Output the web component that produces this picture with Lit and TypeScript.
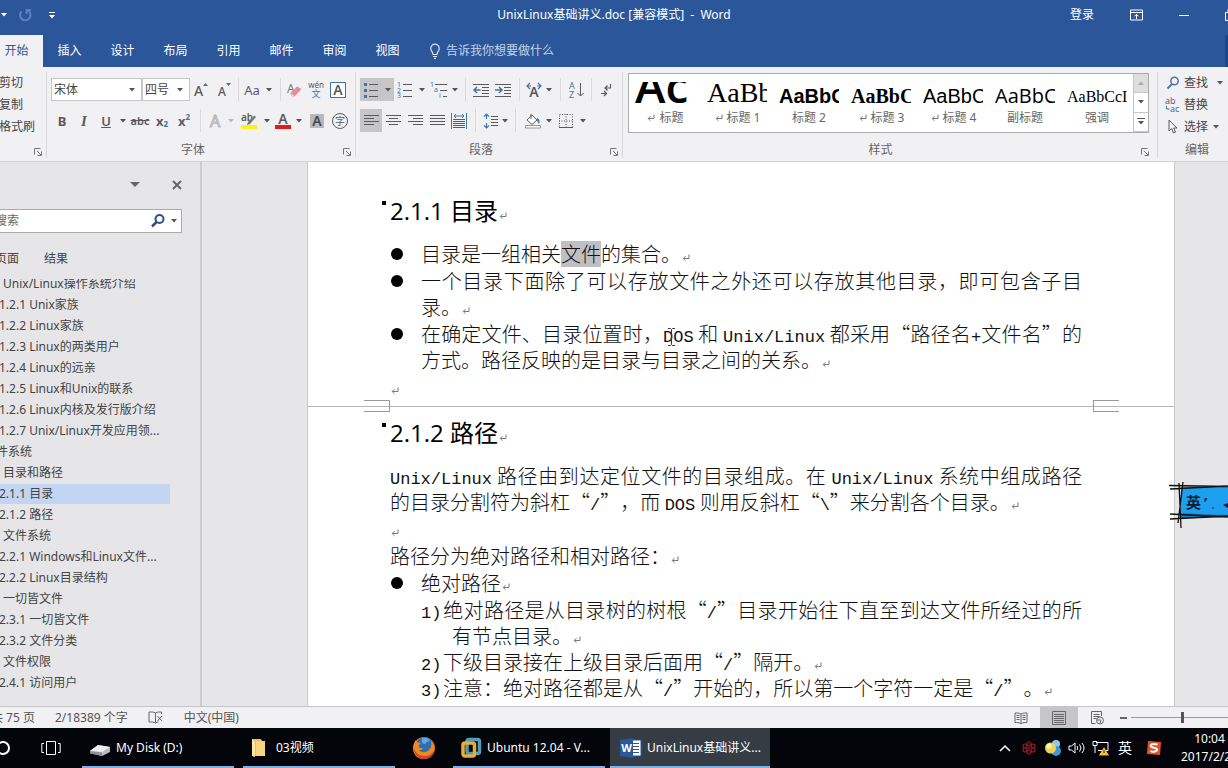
import { LitElement, html, svg, css, TemplateResult } from "lit";
import { customElement, state } from "lit/decorators.js";
import { classMap } from "lit/directives/class-map.js";

const icon = (w: number, h: number, body: unknown) =>
  html`<svg class="ic" width=${w} height=${h} viewBox="0 0 ${w} ${h}" fill="none" aria-hidden="true">${body}</svg>`;

const G = "#5b5b5f";
const B = "#3f76a8";

const caret = (c = "#555") => icon(6, 4, svg`<path d="M0 0h6L3 3.5z" fill=${c}/>`);
const launcher = icon(8, 8, svg`<path d="M.5 6.5v-6h6M3 3l4 4M7.5 3.5v4h-4" stroke="#777"/>`);
const mark = html`<svg class="mark" width="8" height="8" viewBox="0 0 8 8" fill="none" aria-hidden="true"><path d="M7 .5v4H1.5M3.5 2.2L1.2 4.5l2.3 2.3" stroke="#777"/></svg>`;
const lines = (ys: number[], x1: number, x2: number, c = G) =>
  ys.map((y) => svg`<path d="M${x1} ${y}.5H${x2}" stroke=${c}/>`);

const I: Record<string, TemplateResult> = {
  undo: icon(14, 14, svg`<path d="M3.6 3.4A5.2 5.2 0 1 0 9.6 2.4M8.6 6V2H12.8" stroke="#5c82bd" stroke-width="2"/>`),
  custom: icon(8, 7, svg`<path d="M1 .5h6" stroke="#fff"/><path d="M1 3h6L4 6.5z" fill="#fff"/>`),
  ribbonOpt: icon(14, 12, svg`<path d="M.5 1h12v10H.5zM.5 3.5h12M6.5 10V5.5M4.5 7.3l2-2 2 2" stroke="#fff"/>`),
  min: icon(12, 12, svg`<path d="M1 6.5h10" stroke="#fff"/>`),
  restore: icon(12, 12, svg`<path d="M.5 3.5h8v8h-8zM3 3V.5h8.500v8H9" stroke="#fff"/>`),
  bulb: icon(12, 16, svg`<path d="M4 11.500C4 9 1.800 8.300 1.800 5.400a4.200 4.200 0 0 1 8.400 0C10.200 8.300 8 9 8 11.500zM4 13.500h4M5 15.300h2" stroke="#dbe6f6" stroke-width="1.200"/>`),
  grow: icon(16, 16, svg`<text x="1" y="14" font-size="14" font-weight="500" fill=${G}>A</text><path d="M10 4h5L12.500 1z" fill=${B}/>`),
  shrink: icon(16, 16, svg`<text x="2" y="14" font-size="12" font-weight="500" fill=${G}>A</text><path d="M10 1h5L12.500 4z" fill=${B}/>`),
  eraser: icon(18, 16, svg`<text x="1" y="11" font-size="12" fill="#77777b">A</text><path d="M4.500 11L11 4.500l4.500 2.500L9 14H6z" fill="#e58a9b"/><path d="M4.500 11L9 14H6z" fill="#fff" stroke="#e58a9b" stroke-width=".6"/>`),
  pinyin: icon(18, 18, svg`<text x="9" y="7" font-size="8" text-anchor="middle" fill=${G}>wén</text><text x="9" y="16" font-size="9" text-anchor="middle" fill=${B}>文</text>`),
  boxA: icon(18, 18, svg`<path d="M1.500 1.500h15v15h-15z" fill="#fff" stroke=${B}/><text x="9" y="14" font-size="14" text-anchor="middle" font-weight="600" fill=${G}>A</text>`),
  fx: icon(16, 16, svg`<text x="8" y="14" font-size="16" text-anchor="middle" fill="#fff" stroke="#b5b5ba">A</text>`),
  hilite: icon(20, 18, svg`<text x="2" y="9" font-size="10" font-weight="600" fill=${G}>ab</text><path d="M15.500 3.500l1.500 1.500-6 7-3 1 1-3z" fill="#777" /><path d="M2 13h16v4H2z" fill="#fbf312"/>`),
  fcolor: icon(18, 18, svg`<text x="9" y="12" font-size="14" text-anchor="middle" font-weight="600" fill=${G}>A</text><path d="M1 13h16v4H1z" fill="#e01b1b"/>`),
  shadeA: icon(16, 16, svg`<path d="M1 1h14v14H1z" fill="#b9b9bd"/><text x="8" y="13" font-size="14" text-anchor="middle" font-weight="600" fill="#48484c">A</text>`),
  ring: icon(18, 18, svg`<circle cx="9" cy="9" r="7.500" stroke=${G}/><text x="9" y="12.500" font-size="10" text-anchor="middle" fill=${G}>字</text>`),
  bullets: icon(16, 16, svg`${[1, 7, 13].map((y) => svg`<rect x="1" y=${y} width="3" height="3" fill=${B}/>`)}${lines([2, 8, 14], 6, 15)}`),
  numbers: icon(16, 16, svg`${["1", "2", "3"].map((t, i) => svg`<text x="0" y=${5 + i * 5.5} font-size="7" fill=${B}>${t}</text>`)}${lines([2, 8, 14], 6, 15)}`),
  multi: icon(18, 16, svg`<text x="0" y="5" font-size="7" fill=${B}>1</text><text x="4" y="10" font-size="7" fill=${B}>a</text><text x="9" y="16" font-size="7" fill=${B}>i</text>${lines([2], 5, 17)}${lines([8], 10, 17)}${lines([14], 13, 17)}`),
  outdent: icon(16, 14, svg`${lines([1, 13], 0, 16)}${lines([4, 7, 10], 9, 16)}<path d="M7.500 7H1M4 4L1 7l3 3" stroke=${B} stroke-width="1.500"/>`),
  indent: icon(16, 14, svg`${lines([1, 13], 0, 16)}${lines([4, 7, 10], 9, 16)}<path d="M0 7h7M4 4l3 3-3 3" stroke=${B} stroke-width="1.500"/>`),
  scaleA: icon(18, 16, svg`<text x="9" y="15" font-size="14" text-anchor="middle" font-weight="600" fill=${G}>A</text><path d="M5 1L2 4l3 3M13 1l3 3-3 3M2 4h4M16 4h-4" stroke=${B} stroke-width="1.200"/>`),
  sort: icon(16, 18, svg`<text x="0" y="8" font-size="9" fill=${B}>A</text><text x="0" y="17" font-size="9" fill="#7a5a9a">Z</text><path d="M11.500 2v13M8.500 12l3 3 3-3" stroke=${G}/>`),
  marks: icon(12, 14, svg`<path d="M10.500 1v4H5M7.500 2.500L5 5l2.500 2.500M1 10.500h5M4 8l2.500 2.500L4 13" stroke=${G} stroke-width="1.200"/>`),
  left: icon(15, 13, svg`${lines([1, 7], 0, 15)}${lines([4, 10], 0, 10)}`),
  center: icon(15, 13, svg`${lines([1, 7], 0, 15)}${lines([4, 10], 3, 12)}`),
  right: icon(15, 13, svg`${lines([1, 7], 0, 15)}${lines([4, 10], 5, 15)}`),
  just: icon(15, 13, svg`${lines([1, 4, 7, 10], 0, 15)}`),
  dist: icon(16, 16, svg`<path d="M.5 0v16M15.500 0v16M3 3h10M5 1L3 3l2 2M11 1l2 2-2 2" stroke=${B}/>${lines([6, 8, 10, 12, 14], 2, 14)}`),
  spacing: icon(16, 16, svg`<path d="M3.500 1v5M3.500 10v5M1 3.500L3.500 1 6 3.500M1 12.500L3.500 15 6 12.500" stroke=${B} stroke-width="1.200"/>${lines([3, 6, 9, 12], 8, 15)}`),
  bucket: icon(18, 16, svg`<path d="M3 7l5-5 5 5-5 4.500zM7 1v5" stroke=${G} fill="#fff"/><path d="M13 5c3 1 3 4 2 6-1-2-2-2-2-6z" fill=${B}/><path d="M1.500 12.500h15v2.500h-15z" fill="#fff" stroke="#8a9a90"/>`),
  borders: icon(14, 14, svg`<path d="M.5.500h13v13H.5zM7 0v14M0 7h14" stroke=${G} stroke-dasharray="1 1.500"/><path d="M0 13.500h14" stroke=${G}/>`),
  find: icon(14, 14, svg`<circle cx="8.500" cy="5" r="3.700" stroke="#4a76ac" stroke-width="1.500"/><path d="M6 8L1.500 12.500" stroke="#4a76ac" stroke-width="2"/>`),
  replace: icon(16, 16, svg`<text x="0" y="7" font-size="9" fill=${G}>a<tspan fill="#8a4fa0">b</tspan></text><text x="5" y="15" font-size="9" fill="#3a6ea5">ac</text><path d="M1.500 9v3h3" stroke=${B}/>`),
  pointer: icon(12, 16, svg`<path d="M2 1v11l2.700-2.500L6.500 14l2-.9L6.700 9H10z" stroke=${G}/>`),
  close: icon(12, 12, svg`<path d="M2 2l8 8M10 2l-8 8" stroke="#666" stroke-width="2"/>`),
  search: icon(16, 16, svg`<circle cx="9.500" cy="6" r="4" stroke="#2f4f86" stroke-width="2"/><path d="M6.500 9L2 13.500" stroke="#2f4f86" stroke-width="2.500"/>`),
  proof: icon(16, 14, svg`<path d="M7.500 2v9.500M7.500 2C6 .8 3 1 1 1v10c2 0 5 0 6.500 1M7.500 2C9 .8 12 1 13.500 1v2M7.500 12c1-.8 2-1 3-1M9.500 5l4.500 5M14 5l-4.500 5" stroke="#666"/>`),
  read: icon(14, 12, svg`<path d="M7 2v9.500M7 2C5 1 3 1 1 1v9.500c2 0 4 0 6 1 2-1 4-1 6-1V1C11 1 9 1 7 2zM2.500 3.500h3M2.500 5.500h3M2.500 7.500h3M8.500 3.500h3M8.500 5.500h3M8.500 7.500h3" stroke="#666"/>`),
  print: icon(14, 14, svg`<path d="M.5.500h13v13H.5z" stroke="#666"/>${lines([3, 5, 7, 9, 11], 2, 12, "#666")}`),
  web: icon(14, 14, svg`<path d="M11.500 5V.500H1.500v12h4M3.500 3.500h6M3.500 5.500h6M3.500 7.500h3" stroke="#666"/><circle cx="10" cy="9.500" r="3.500" stroke="#666"/><path d="M7 9h4l-1 3" stroke="#666"/>`),
  cortana: icon(16, 16, svg`<circle cx="8" cy="8" r="6" stroke="#fff" stroke-width="2"/>`),
  taskview: icon(20, 16, svg`<path d="M5.500 1.500h9v13h-9zM3 3.500H.800v9H3M17 3.500h2.200v9H17" stroke="#fff"/>`),
  disk: icon(22, 18, svg`<path d="M1 12L9 6l12 2v5l-8 4L1 14z" fill="#b9bcc0"/><path d="M1 12L9 6l12 2-8 5z" fill="#eceef0"/><path d="M1 12l12 1.500V17L1 14.500z" fill="#8d9196"/>`),
  folder: icon(16, 20, svg`<path d="M1 1h9l1 2h2v15H1z" fill="#e9bd5b"/><path d="M1 1l3 2v16l-3-1z" fill="#fbe7a4"/><path d="M5 3h9v15H5z" fill="#f6d67c"/>`),
  firefox: icon(24, 24, svg`<circle cx="12" cy="12" r="11" fill="#e2691d"/><circle cx="12.500" cy="9" r="8" fill="#2c6fb3"/><path d="M10 2c3-1 7 0 8 3-2 1-3 0-4 2s-3 1-4-1 0-3 0-4z" fill="#63a8dd"/><path d="M4 4c0 1 1 2 1.500 2.500L9 7c-1 1-3 2-2 4 1 1.500 3 1 4 1-1 2-3 2-4 2 2 3 7 3 10 0 2-2 3-5 2-9 4 4 4 9 2 12-3 5-9 7-14 5S0 13 2 8c.5-1.500 1-3 2-4z" fill="#ee8a22"/><path d="M1.500 10c.5 6 5 10 11 10 4 0 7-2 9.500-5-1 5-5 8-10 8S1 18 1.500 10z" fill="#d5432a"/>`),
  vmware: icon(20, 20, svg`<rect x="6" y="1.500" width="12.500" height="14" rx="2" stroke="#4f9fb5" stroke-width="3.500"/><rect x="2" y="5" width="11.500" height="13" rx="2" stroke="#e9ad3b" stroke-width="3.500"/>`),
  word: icon(22, 20, svg`<path d="M10 2h11v16H10z" fill="#fff" stroke="#2b579a"/>${lines([5, 8, 11, 14], 13, 19, "#2b579a")}<path d="M0 2l13-2v20L0 18z" fill="#2b579a"/><text x="6.500" y="14" font-size="11" font-weight="700" text-anchor="middle" fill="#fff">W</text>`),
  chev: icon(12, 8, svg`<path d="M1 7l5-5 5 5" stroke="#fff" stroke-width="1.500"/>`),
  flower: icon(14, 14, svg`${[[7, 3], [7, 11], [3, 5], [11, 5], [3, 9], [11, 9]].map(([x, y]) => svg`<circle cx=${x} cy=${y} r="2" stroke="#9c1c26" stroke-width="1.200"/>`)}<circle cx="7" cy="7" r="1" fill="#9c1c26"/>`),
  bubble: icon(18, 18, svg`<circle cx="12" cy="5" r="4" fill="#8ccbe8"/><circle cx="12" cy="12" r="5" fill="#3f97d6"/><circle cx="6.500" cy="9" r="5.500" fill="#f2d25a"/><circle cx="5" cy="7" r="2.500" fill="#fdf2b8"/>`),
  speaker: icon(18, 14, svg`<path d="M1 5h2.500L7 2v10L3.500 9H1zM9 5q1.500 2 0 4M11.500 3.500q3 3.500 0 7M14 2q4 5 0 10" stroke="#fff"/>`),
  net: icon(18, 16, svg`<path d="M4 2.500h12v8H6M8 13.500h3M1 1.500h4v4H1zM3 6v7" stroke="#fff"/><path d="M12 7l5 8.500H7z" fill="#f1c232"/><path d="M12 10v3" stroke="#333"/>`),
  sogou: icon(16, 16, svg`<path d="M2 1l13 1-1 13-13-1z" fill="#e2532a"/><path d="M11.500 4.500C6 3 4 5 5 6.500c1 1.500 6 1 6 3S7 12.500 4.500 11" stroke="#fff" stroke-width="2"/>`),
};

type Tool = [kind: string, width: number, label?: string];

const fontRow1: Tool[] = [["grow", 24, "增大字号"], ["shrink", 22, "减小字号"], ["|", 6], ["Aa", 22, "更改大小写"], ["v", 12], ["|", 10], ["eraser", 20, "清除格式"], ["pinyin", 22, "拼音指南"], ["boxA", 22, "字符边框"]];
const fontRow2: Tool[] = [["B", 22, "加粗"], ["I", 22, "倾斜"], ["U", 22, "下划线"], ["v", 12], ["abc", 22, "删除线"], ["sub", 22, "下标"], ["sup", 22, "上标"], ["|", 10], ["fx", 20, "文本效果"], ["v~", 12], ["hilite", 24, "突出显示"], ["v", 12], ["fcolor", 20, "字体颜色"], ["v", 12], ["shadeA", 24, "字符底纹"], ["ring", 22, "带圈字符"]];
const paraRow1: Tool[] = [["bullets*", 22, "项目符号"], ["v*", 12], ["numbers", 22, "编号"], ["v", 12], ["multi", 22, "多级列表"], ["v", 10], ["|", 10], ["outdent", 22, "减少缩进量"], ["indent", 22, "增加缩进量"], ["|", 10], ["scaleA", 20, "中文版式"], ["v", 10], ["|", 12], ["sort", 22, "排序"], ["|", 6], ["marks", 24, "显示编辑标记"]];
const paraRow2: Tool[] = [["left*", 22, "左对齐"], ["center", 22, "居中"], ["right", 22, "右对齐"], ["just", 22, "两端对齐"], ["dist", 22, "分散对齐"], ["|", 10], ["spacing", 22, "行距"], ["v", 6], ["|", 14], ["bucket", 22, "底纹"], ["v", 10], ["borders", 24, "边框"], ["v", 10]];

const styleItems: [sample: string, look: string, name: string, linked: boolean][] = [
  ["Ac", "huge", "标题", true],
  ["AaBb", "song", "标题 1", true],
  ["AaBbC", "bold", "标题 2", false],
  ["AaBbC", "roman-bold", "标题 3", true],
  ["AaBbC", "sans", "标题 4", true],
  ["AaBbC", "light", "副标题", false],
  ["AaBbCcI", "roman", "强调", false],
];

const outline: [level: number, text: string][] = [
  [2, "Unix/Linux操作系统介绍"], [3, "1.2.1 Unix家族"], [3, "1.2.2 Linux家族"], [3, "1.2.3 Linux的两类用户"],
  [3, "1.2.4 Linux的远亲"], [3, "1.2.5 Linux和Unix的联系"], [3, "1.2.6 Linux内核及发行版介绍"], [3, "1.2.7 Unix/Linux开发应用领..."],
  [1, "件系统"], [2, "目录和路径"], [3, "2.1.1 目录"], [3, "2.1.2 路径"], [2, "文件系统"], [3, "2.2.1 Windows和Linux文件..."],
  [3, "2.2.2 Linux目录结构"], [2, "一切皆文件"], [3, "2.3.1 一切皆文件"], [3, "2.3.2 文件分类"], [2, "文件权限"], [3, "2.4.1 访问用户"],
];

const menuTabs = ["开始", "插入", "设计", "布局", "引用", "邮件", "审阅", "视图"];

@customElement("app-root")
export class AppRoot extends LitElement {
  @state() private tab = "开始";
  @state() private section = "2.1.1 目录";

  static styles = css`
    :host { display: grid; grid-template-rows: auto auto auto minmax(0, 1fr) auto auto; height: 100vh; overflow: hidden; position: relative; font: 12px/16px "Noto Sans", "Noto Sans CJK SC", sans-serif; color: #444; background: #e6e6e8; }
    * { box-sizing: border-box; }
    button, input, select { font: inherit; color: inherit; border: 0; background: none; padding: 0; margin: 0; border-radius: 0; outline: 0; }
    button { display: flex; align-items: center; justify-content: center; white-space: nowrap; }
    a { color: inherit; text-decoration: none; }
    ul, ol, p, h2 { margin: 0; padding: 0; list-style: none; }
    .ic { display: block; flex: none; overflow: visible; }

    .title { display: grid; grid-template-columns: minmax(0, 1fr) auto minmax(0, 1fr); height: 35px; padding-bottom: 5px; align-items: center; background: #2b579a; color: #fff; overflow: hidden; }
    .quick { display: flex; align-items: center; gap: 11px; padding-left: 1px; }
    .quick .more { margin-left: 5px; }
    .wbtns { display: flex; justify-content: flex-end; margin-right: -26px; }
    .wbtns button { width: 47px; height: 30px; }
    .wbtns .login { width: 62px; }

    .tabs { display: flex; height: 32px; background: #2b579a; color: #fff; overflow: hidden; }
    .tabs .tab { width: 53px; flex: none; }
    .tabs .tab:first-child { margin-left: -10px; }
    .tabs .tab.on { background: #f1f0f3; color: #2b579a; }
    .tell { gap: 5px; margin-left: 15px; color: #c3d3ec; }
    .edge { width: 3px; margin-left: auto; background: #1e4682; }

    .ribbon { display: flex; height: 95px; padding: 5px 0 3px; background: #f1f0f3; border-bottom: 1px solid #d2d2d5; overflow: hidden; }
    .group { display: flex; flex-direction: column; justify-content: space-between; flex: none; border-right: 1px solid #d8d8db; padding: 6px 4px 0; }
    .group:last-child { border-right: 0; }
    .font { width: 309px; }
    .para { width: 267px; }
    .styles { flex: 1; min-width: 0; padding: 1px 8px 0 5px; }
    .clip { width: 47px; padding: 0 4px 0 0; }
    .edit { width: 70px; padding: 0 0 0 8px; }
    .foot { display: flex; height: 17px; align-items: center; text-align: center; color: #666; }
    .foot button { flex: 0 0 16px; justify-content: flex-end; align-self: flex-end; margin-bottom: 2px; }
    .foot span { flex: 1; }
    .rows { display: grid; gap: 8px; }
    .row { display: flex; height: 23px; }
    .on2 { background: #c6c6c9; }
    .w6 { width: 6px; } .w10 { width: 10px; } .w12 { width: 12px; } .w14 { width: 14px; } .w20 { width: 20px; } .w22 { width: 22px; } .w24 { width: 24px; }
    .rule { display: flex; justify-content: center; }
    .rule::before { content: ""; width: 1px; background: #d8d8db; }
    .tool { font-size: 13px; color: #5b5b5f; }
    .tB { font-weight: 700; } .tI { font-style: italic; font-family: "Liberation Serif", serif; font-weight: 700; font-size: 15px; }
    .tU { text-decoration: underline; font-weight: 600; } .tabc { text-decoration: line-through; font-size: 11px; font-weight: 600; }
    .tsub, .tsup { font-weight: 700; } .tsub small, .tsup small { font-size: 8px; color: #3f76a8; }
    .tsub small { align-self: flex-end; } .tsup small { align-self: flex-start; }
    .combo { display: grid; grid-template-columns: 1fr 12px; align-items: center; background: #fff; border: 1px solid #c6c6c9; }
    .combo select { grid-area: 1 / 1 / 2 / 3; appearance: none; width: 100%; padding-left: 2px; height: 21px; color: #444; }
    .combo .ic { grid-area: 1 / 2; pointer-events: none; }
    .face { width: 91px; } .size { width: 48px; margin-right: -1px; }

    .cmds { display: grid; }
    .cmds button { height: 22px; justify-content: flex-start; gap: 5px; }
    .clip .cmds { margin-left: -1px; }
    .cmds .find { gap: 9px; }
    .lead { display: flex; align-items: center; gap: 5px; }
    .lead .pic { width: 13px; display: flex; justify-content: center; }

    .gallery { display: flex; height: 60px; background: #fff; border: 1px solid #ababab; overflow: hidden; }
    .items { display: flex; flex: 1; min-width: 0; overflow: hidden; }
    .item { flex: 0 0 72px; display: flex; flex-direction: column; justify-content: flex-end; padding-bottom: 5px; color: #666; }
    .sample { display: flex; align-items: flex-end; width: 60px; height: 27px; overflow: hidden; color: #000; white-space: nowrap; }
    .huge { font: 600 46px/48px "Open Sans", sans-serif; }
    .song { font: 28px/32px "Liberation Serif", serif; }
    .bold { font: 700 20px/26px "Liberation Sans", sans-serif; }
    .roman-bold { font: 700 20px/26px "Liberation Serif", serif; }
    .sans { font: 20px/26px "Liberation Sans", sans-serif; }
    .light { font: 20px/26px "Open Sans", sans-serif; }
    .roman { font: 16px/24px "Liberation Serif", serif; }
    .name { display: flex; align-items: center; gap: 4px; height: 18px; }
    .scroll { display: grid; grid-template-rows: 1fr 1fr 1fr; width: 15px; border-left: 1px solid #c6c6c9; }
    .scroll button { border-bottom: 1px solid #c6c6c9; }
    .scroll button:first-child { background: #dededf; }

    .work { display: flex; min-height: 0; overflow: hidden; }
    .pane { display: flex; flex-direction: column; flex: 0 0 202px; border-right: 2px solid #cdcdd0; overflow: hidden; }
    .phead { display: flex; justify-content: flex-end; gap: 31px; align-items: center; height: 46px; padding: 0 17px 0 0; }
    .box { display: flex; align-items: center; gap: 5px; height: 24px; margin: 1px 18px 0 -6px; padding-right: 4px; background: #fff; border: 1px solid #ababab; }
    .box input { flex: 1; min-width: 0; }
    .box input::placeholder { color: #666; opacity: 1; }
    .ptabs { display: flex; gap: 25px; margin: 18px 0 12px -5px; }
    .tree { overflow: hidden; margin-left: -4px; display: flex; flex-direction: column; }
    .tree li { height: 21px; line-height: 20px; flex: none; margin-right: 30px; white-space: nowrap; }
    .tree li:first-child { margin-top: -5px; }
    .tree a { display: block; height: 20px; }
    .l1 a { padding-left: 0; } .l2 a { padding-left: 7px; } .l3 a { padding-left: 3px; }
    .cur a { background: #c2d5f2; }

    .canvas { flex: 1; min-width: 0; display: flex; padding: 0 53px 0 105px; overflow: hidden; }
    .page { flex: 1; min-width: 0; background: #fff; border: 1px solid #c9c9cc; border-top: 0; border-bottom: 0; color: #111; font: 300 20px/26px "Noto Sans CJK SC", sans-serif; text-align: justify; text-spacing-trim: space-all; }
    .sheet { padding: 0 92px 0 82px; }
    .sheet:first-child { padding-top: 33px; }
    .sheet h2 { position: relative; font: 400 24px/32px "Open Sans", "Noto Sans CJK SC", sans-serif; margin-bottom: 14px; color: #000; text-align: left; }
    .sheet h2::before { content: ""; position: absolute; left: -8px; top: 6px; width: 4px; height: 4px; background: #000; }
    .pagebreak + .sheet h2 { margin-top: 5px; }
    .mark { display: inline-block; margin-left: 1px; }
    .sheet p, .dots li { margin-bottom: 1px; }
    .sheet .blank { margin-bottom: 0; }
    .dots li { display: grid; grid-template-columns: 13px minmax(0, 1fr); column-gap: 18px; }
    .dots li::before { content: ""; width: 12px; height: 12px; margin: 7px 0 0 1px; border-radius: 50%; background: #000; }
    .steps li { padding-left: 62px; text-indent: -31px; }
    .no { display: inline-block; width: 22px; text-indent: 0; }
    .en { font: 400 17px/0 "Liberation Mono", monospace; }
    .sel { display: inline-block; background: #c0c0c2; line-height: 26px; vertical-align: top; }
    .pagebreak { display: flex; justify-content: space-between; height: 12px; padding: 0 55px 0 56px; background: linear-gradient(#b5b5b8, #b5b5b8) 0 6px / 100% 1px no-repeat; }
    .pagebreak i { width: 26px; border: 1px solid #999; }
    .pagebreak i:first-child { border-left: 0; }
    .pagebreak i:last-child { border-right: 0; }

    .status { display: flex; align-items: center; height: 22px; border-top: 1px solid #c6c6c9; background: #f1f0f3; color: #555; overflow: hidden; }
    .counts { display: flex; gap: 20px; margin-left: -9px; align-items: center; }
    .views { display: flex; align-items: stretch; height: 21px; margin: 0 -6px 0 auto; }
    .views button { width: 38px; }
    .views .minus { width: 15px; }
    .views .minus::before { content: ""; width: 7px; height: 2px; background: #666; }
    input.zoom { appearance: none; width: 103px; background: linear-gradient(#999, #999) 0 10px / 100% 1px no-repeat; }
    input.zoom::-webkit-slider-thumb { appearance: none; width: 3px; height: 11px; background: #555; }

    .bar { display: flex; height: 40px; background: #03050b; color: #fff; overflow: hidden; }
    .bar .sq { width: 46px; margin-left: -20px; }
    .bar .tv { width: 50px; margin-right: 6px; }
    .app { width: 152px; justify-content: flex-start; gap: 5px; padding: 2px 7px 0; border-bottom: 2px solid #7fb0e0; flex: none; font-size: 12px; }
    .app + .app { margin-left: 9px; }
    .app.now { width: 160px; background: #363c44; margin-left: 5px; padding: 2px 10px 0; }
    .app.dir, .app.vm { padding-left: 8px; gap: 9px; }
    .app.vm { gap: 6px; }
    .fire { width: 58px; flex: none; }
    .tray { display: flex; margin: 0 -20px 0 auto; }
    .tray button { width: 24px; flex: none; font-size: 14px; }
    .tray .so { width: 34px; }
    .tray .clock { width: 77px; flex-direction: column; font-size: 12px; line-height: 18px; }

    .ime { position: absolute; right: 0; top: 482px; width: 59px; height: 46px; }
    .ime text { font-size: 15px; font-weight: 700; }
    .beam { position: absolute; left: 667px; top: 327px; }
  `;

  private tool([kind, w, label]: Tool) {
    if (kind === "|") return html`<span class="rule w${w}"></span>`;
    const on = kind.endsWith("*");
    const k = kind.replace("*", "");
    const cls = `tool w${w} t${k.replace("~", "")} ${on ? "on2" : ""}`;
    let body: unknown = I[k] ?? k;
    if (k === "v") body = caret();
    if (k === "v~") body = caret("#bbb");
    if (k === "sub") body = html`x<small>2</small>`;
    if (k === "sup") body = html`x<small>2</small>`;
    return html`<button class=${cls} aria-label=${label ?? "更多选项"}>${body}</button>`;
  }

  private foot(name: string, launch = true) {
    return html`<div class="foot"><span>${name}</span>${launch ? html`<button aria-label="${name}设置">${launcher}</button>` : ""}</div>`;
  }

  private ribbon() {
    return html`<div class="ribbon">
      <div class="group clip">
        <div class="cmds"><button>剪切</button><button>复制</button><button>格式刷</button></div>
        ${this.foot("")}
      </div>
      <div class="group font">
        <div class="rows">
          <div class="row">
            <label class="combo face"><select aria-label="字体"><option>宋体</option></select>${caret()}</label>
            <label class="combo size"><select aria-label="字号"><option>四号</option></select>${caret()}</label>
            ${fontRow1.map((t) => this.tool(t))}
          </div>
          <div class="row">${fontRow2.map((t) => this.tool(t))}</div>
        </div>
        ${this.foot("字体")}
      </div>
      <div class="group para">
        <div class="rows">
          <div class="row">${paraRow1.map((t) => this.tool(t))}</div>
          <div class="row">${paraRow2.map((t) => this.tool(t))}</div>
        </div>
        ${this.foot("段落")}
      </div>
      <div class="group styles">
        <div class="gallery">
          <div class="items">
            ${styleItems.map(([s, look, name, linked]) => html`<button class="item"><span class="sample ${look}">${s}</span><span class="name">${linked ? mark : ""}${name}</span></button>`)}
          </div>
          <div class="scroll">
            <button aria-label="上一行">${icon(6, 4, svg`<path d="M0 4h6L3 .5z" fill="#aaa"/>`)}</button>
            <button aria-label="下一行">${caret()}</button>
            <button aria-label="其他">${icon(8, 7, svg`<path d="M0 .5h8" stroke="#555"/><path d="M1 3h6L4 6.500z" fill="#555"/>`)}</button>
          </div>
        </div>
        ${this.foot("样式")}
      </div>
      <div class="group edit">
        <div class="cmds">
          <button class="find"><span class="lead"><span class="pic">${I.find}</span>查找</span>${caret()}</button>
          <button><span class="lead"><span class="pic">${I.replace}</span>替换</span></button>
          <button><span class="lead"><span class="pic">${I.pointer}</span>选择</span>${caret()}</button>
        </div>
        ${this.foot("编辑", false)}
      </div>
    </div>`;
  }

  private doc() {
    const en = (t: string) => html`<span class="en">${t}</span>`;
    return html`<main class="canvas"><article class="page" lang="zh-CN">
      <section class="sheet">
        <h2>2.1.1 目录${mark}</h2>
        <ul class="dots">
          <li><span>目录是一组相关<span class="sel">文件</span>的集合。${mark}</span></li>
          <li><span>一个目录下面除了可以存放文件之外还可以存放其他目录，即可包含子目录。${mark}</span></li>
          <li><span>在确定文件、目录位置时，${en("DOS")} 和 ${en("Unix/Linux")} 都采用“路径名${en("+")}文件名”的方式。路径反映的是目录与目录之间的关系。${mark}</span></li>
        </ul>
        <p class="blank">${mark}</p>
      </section>
      <div class="pagebreak"><i></i><i></i></div>
      <section class="sheet">
        <h2>2.1.2 路径${mark}</h2>
        <p>${en("Unix/Linux")} 路径由到达定位文件的目录组成。在 ${en("Unix/Linux")} 系统中组成路径的目录分割符为斜杠“${en("/")}”，而 ${en("DOS")} 则用反斜杠“${en("\\")}”来分割各个目录。${mark}</p>
        <p>${mark}</p>
        <p>路径分为绝对路径和相对路径：${mark}</p>
        <ul class="dots"><li><span>绝对路径${mark}</span></li></ul>
        <ol class="steps">
          <li><span class="no en">1)</span>绝对路径是从目录树的树根“${en("/")}”目录开始往下直至到达文件所经过的所有节点目录。${mark}</li>
          <li><span class="no en">2)</span>下级目录接在上级目录后面用“${en("/")}”隔开。${mark}</li>
          <li><span class="no en">3)</span>注意：绝对路径都是从“${en("/")}”开始的，所以第一个字符一定是“${en("/")}”。${mark}</li>
        </ol>
      </section>
    </article></main>`;
  }

  render() {
    return html`
      <header class="title">
        <div class="quick"><button aria-label="撤消选项">${caret("#fff")}</button><button aria-label="恢复">${I.undo}</button><button class="more" aria-label="自定义快速访问工具栏">${I.custom}</button></div>
        <span>UnixLinux基础讲义.doc [兼容模式]&nbsp; - &nbsp;Word</span>
        <div class="wbtns"><button class="login">登录</button><button aria-label="功能区显示选项">${I.ribbonOpt}</button><button aria-label="最小化">${I.min}</button><button aria-label="还原">${I.restore}</button></div>
      </header>
      <nav class="tabs">
        ${menuTabs.map((t) => html`<button class=${classMap({ tab: true, on: this.tab === t })} @click=${() => (this.tab = t)}>${t}</button>`)}
        <button class="tell">${I.bulb}告诉我你想要做什么</button>
        <span class="edge"></span>
      </nav>
      ${this.ribbon()}
      <div class="work">
        <aside class="pane">
          <div class="phead"><button aria-label="导航选项">${icon(10, 6, svg`<path d="M0 0h10L5 5z" fill="#666"/>`)}</button><button aria-label="关闭">${I.close}</button></div>
          <div class="box"><input aria-label="搜索文档" placeholder="搜索" /><button aria-label="搜索">${I.search}</button><button aria-label="搜索选项">${caret()}</button></div>
          <div class="ptabs"><button>页面</button><button>结果</button></div>
          <ul class="tree">
            ${outline.map(([l, t]) => html`<li class=${classMap({ ["l" + l]: true, cur: this.section === t })}><a href="#" @click=${(e: Event) => { e.preventDefault(); this.section = t; }}>${t}</a></li>`)}
          </ul>
        </aside>
        ${this.doc()}
      </div>
      <footer class="status">
        <div class="counts"><span>共 75 页</span><span>2/18389 个字</span><button aria-label="校对">${I.proof}</button><span>中文(中国)</span></div>
        <div class="views">
          <button aria-label="阅读视图">${I.read}</button><button class="on2" aria-label="页面视图">${I.print}</button><button aria-label="Web 版式视图">${I.web}</button>
          <button class="minus" aria-label="缩小"></button><input class="zoom" type="range" min="0" max="100" value="50" aria-label="显示比例" />
        </div>
      </footer>
      <div class="bar">
        <button class="sq" aria-label="搜索">${I.cortana}</button><button class="tv" aria-label="任务视图">${I.taskview}</button>
        <button class="app">${I.disk}My Disk (D:)</button>
        <button class="app dir">${I.folder}03视频</button>
        <button class="fire" aria-label="Firefox">${I.firefox}</button>
        <button class="app vm">${I.vmware}Ubuntu 12.04 - V...</button>
        <button class="app now">${I.word}UnixLinux基础讲义...</button>
        <div class="tray">
          <button aria-label="显示隐藏的图标">${I.chev}</button><button aria-label="插件">${I.flower}</button><button aria-label="助手">${I.bubble}</button><button aria-label="音量">${I.speaker}</button><button aria-label="网络">${I.net}</button><button>英</button><button class="so" aria-label="输入法">${I.sogou}</button>
          <button class="clock"><span>10:04</span><span>2017/2/22</span></button>
        </div>
      </div>
      <svg class="ime" viewBox="0 0 59 46" fill="none"><path d="M12 5l47-1v30L11 36z" fill="#1c9fee"/><path d="M11 31l48 2v2l-48 1z" fill="#1679ba"/><path d="M0 3.500l59 1M1 7l58-3M1 32l58 3M1 37l58-3M10 1l2 45M14 0L9 41" stroke="#111" stroke-width="1.300"/><text x="17" y="26" fill="#0b1c33">英</text><text x="35" y="26" fill="#0b1c33">’</text><path d="M43 26h2" stroke="#0b1c33"/><path d="M54 23l5-2v5z" fill="#0b1c33"/></svg>
      <svg class="beam" width="9" height="20" viewBox="0 0 9 20" fill="none" aria-hidden="true"><path d="M1 1.500h2.500l1 1 1-1H8M4.500 2.500v15M1 18.500h2.500l1-1 1 1H8" stroke="#333"/></svg>
    `;
  }
}
